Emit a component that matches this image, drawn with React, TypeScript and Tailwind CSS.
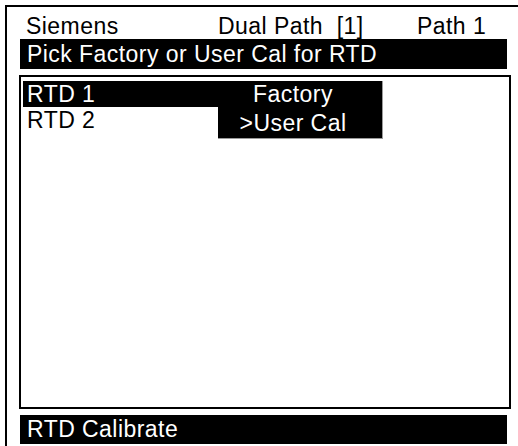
export default function App() {
  return (
    <div className="h-[446px] w-[518px] overflow-hidden bg-white font-['Liberation_Sans',Arial,sans-serif] text-[23px] tracking-[0.45px] text-black">
      <div className="ml-[5px] mt-[5px] flex h-[441px] flex-col border-l-2 border-t-2 border-black pl-[12px] pr-[7px]">
        {/* header line */}
        <div className="mt-[6px] flex h-[26px] items-center whitespace-pre pl-[7px] leading-[26px]">
          <span className="w-[192px]">Siemens</span>
          <span className="w-[199px]">Dual Path  [1]</span>
          <span>Path 1</span>
        </div>

        <div className="ml-[1px] mr-[4px] h-[30px] bg-black pl-[7px] leading-[30px] text-white">
          Pick Factory or User Cal for RTD
        </div>

        {/* list + picker */}
        <div className="relative mt-[6px] h-[334px] border-2 border-black pl-[2px] pt-[4px]">
          <div className="h-[26px] w-[195px] bg-black pl-[4px] leading-[26px] text-white">RTD 1</div>
          <div className="h-[26px] pl-[4px] leading-[26px]">RTD 2</div>

          <div className="absolute left-[197px] top-[4px] h-[58px] w-[165px] border-b border-r border-[#9a9a9a] bg-black text-white">
            <div className="h-[29px] pr-[14px] text-center leading-[26px]">Factory</div>
            <div className="h-[29px] pr-[14px] text-center leading-[26px]">&gt;User Cal</div>
          </div>
        </div>

        <div className="ml-[1px] mr-[4px] mt-[6px] h-[29px] bg-black pl-[7px] leading-[29px] text-white">
          RTD Calibrate
        </div>
      </div>
    </div>
  );
}
